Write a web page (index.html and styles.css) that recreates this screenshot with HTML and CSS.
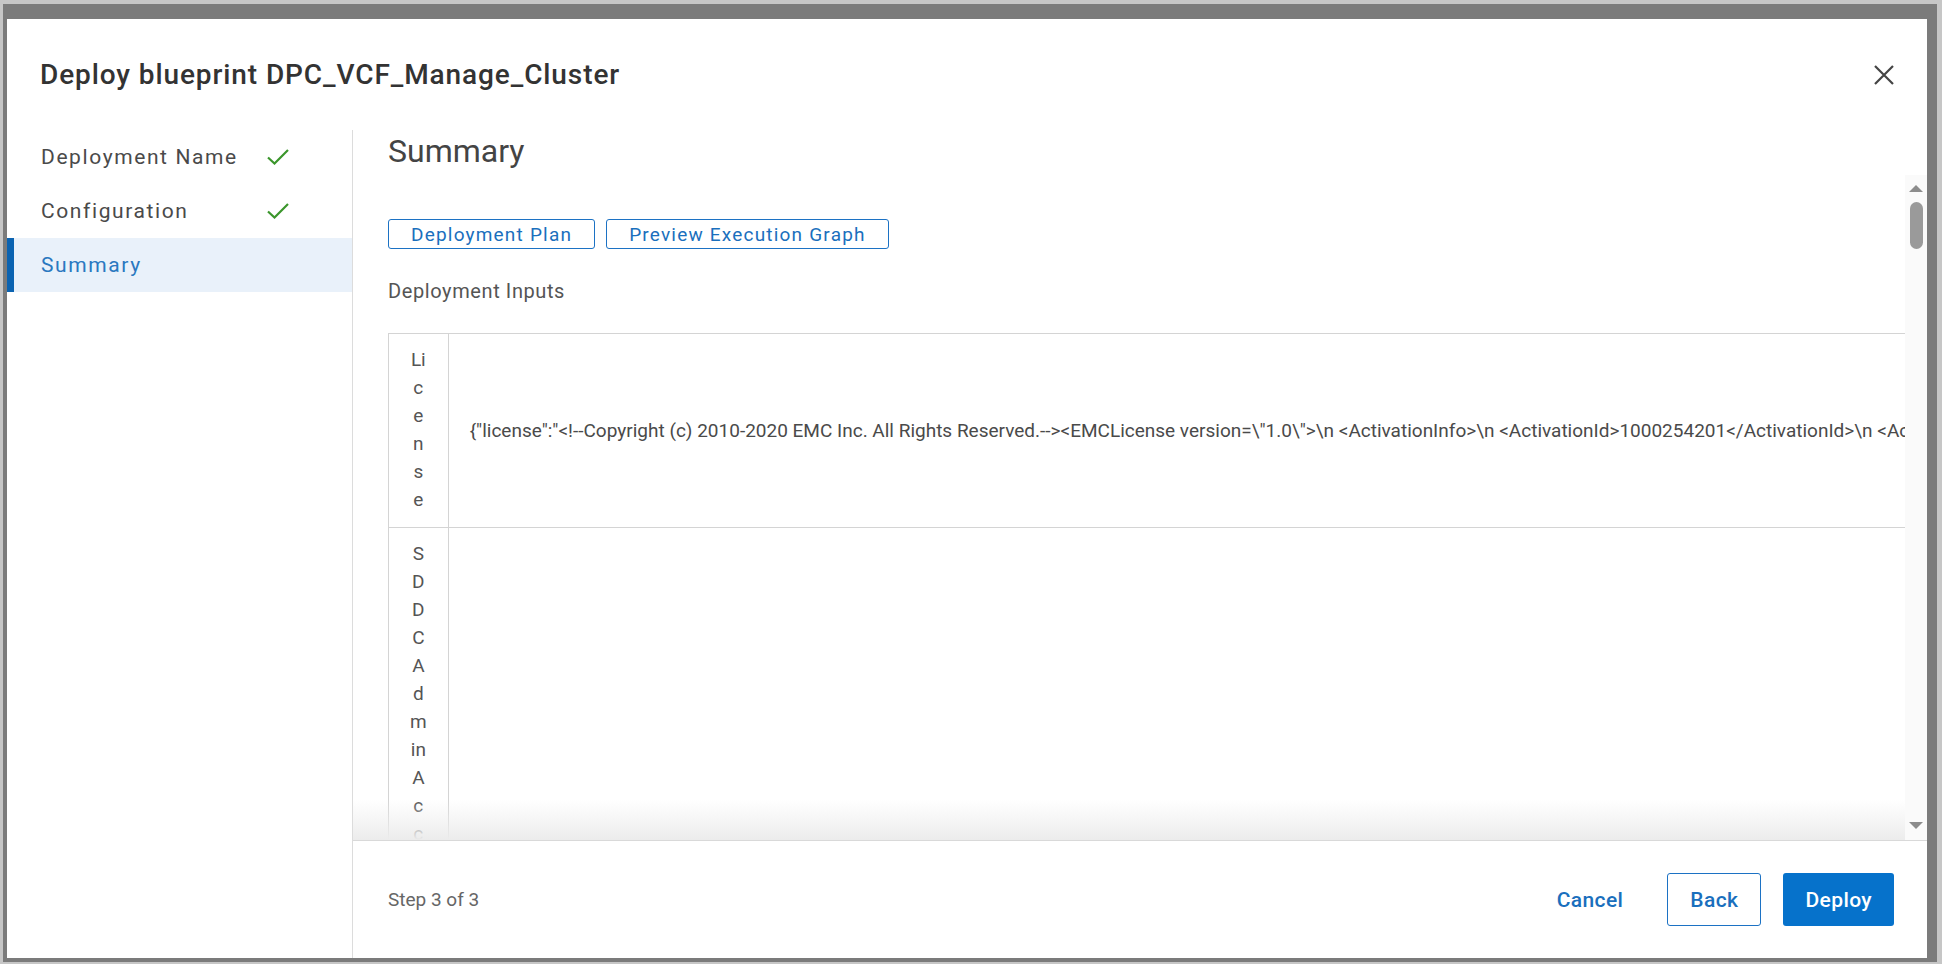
FILE: index.html
```html
<!DOCTYPE html>
<html lang="en">
<head>
    <meta charset="UTF-8">
    <meta name="viewport" content="width=device-width, initial-scale=1.0">
    <title>Deploy blueprint</title>
    <link rel="stylesheet" href="styles.css">
</head>
<body>
    <div class="backdrop">
        <div class="modal">
            <header class="modal-header">
                <h2 class="modal-title">Deploy blueprint DPC_VCF_Manage_Cluster</h2>
                <button class="close-btn" aria-label="Close">
                    <svg width="22" height="22" viewBox="0 0 22 22"><path d="M2 2L20 20M20 2L2 20" /></svg>
                </button>
            </header>

            <div class="modal-body">
                <nav class="steps">
                    <div class="step done">
                        <span class="step-label">Deployment Name</span>
                        <svg class="check" width="22" height="16" viewBox="0 0 22 16"><path d="M1 8.5L7.5 14.5L21 1" /></svg>
                    </div>
                    <div class="step done">
                        <span class="step-label">Configuration</span>
                        <svg class="check" width="22" height="16" viewBox="0 0 22 16"><path d="M1 8.5L7.5 14.5L21 1" /></svg>
                    </div>
                    <div class="step active">
                        <span class="step-label">Summary</span>
                    </div>
                </nav>

                <section class="pane">
                    <h3 class="pane-title">Summary</h3>

                    <div class="scroll-wrap">
                        <div class="scroll-body">
                            <div class="actions">
                                <button class="btn-outline">Deployment Plan</button>
                                <button class="btn-outline">Preview Execution Graph</button>
                            </div>
                            <div class="section-label">Deployment Inputs</div>
                            <table class="inputs">
                                <tr>
                                    <td class="key">License</td>
                                    <td class="val">{"license":"&lt;!--Copyright (c) 2010-2020 EMC Inc. All Rights Reserved.--&gt;&lt;EMCLicense version=\"1.0\"&gt;\n &lt;ActivationInfo&gt;\n &lt;ActivationId&gt;1000254201&lt;/ActivationId&gt;\n &lt;ActivationDate&gt;2020-06-01&lt;/ActivationDate&gt;\n</td>
                                </tr>
                                <tr>
                                    <td class="key">SDDCAdminAccountPassword</td>
                                    <td class="val"></td>
                                </tr>
                            </table>
                        </div>
                        <div class="rail">
                            <span class="arrow up"></span>
                            <span class="thumb"></span>
                            <span class="arrow down"></span>
                        </div>
                        <div class="fade"></div>
                    </div>

                    <footer class="pane-footer">
                        <span class="step-count">Step 3 of 3</span>
                        <div class="footer-actions">
                            <button class="btn-link">Cancel</button>
                            <button class="btn-outline big">Back</button>
                            <button class="btn-primary">Deploy</button>
                        </div>
                    </footer>
                </section>
            </div>
        </div>
    </div>
</body>
</html>
```

FILE: styles.css
```css
html, body {
    height: 100%;
}

body {
    margin: 0;
    padding: 4px 5px 2px 3px;
    box-sizing: border-box;
    background: #c6c6c6;
    font-family: Roboto, "Liberation Sans", sans-serif;
    color: #444;
}

.backdrop {
    height: 100%;
    box-sizing: border-box;
    padding: 15px 10px 4px 4px;
    background: #7b7b7b;
}

.modal {
    height: 939px;
    background: #fff;
    display: flex;
    flex-direction: column;
}

/* header */

.modal-header {
    height: 111px;
    flex: none;
    display: flex;
    align-items: center;
    justify-content: space-between;
    padding: 0 32px 0 33px;
}

.modal-title {
    margin: 0;
    font-size: 28px;
    font-weight: 500;
    letter-spacing: 0.9px;
    color: #333;
}

.close-btn {
    border: 0;
    background: none;
    padding: 0;
    width: 22px;
    height: 22px;
    cursor: pointer;
}

.close-btn path {
    stroke: #444;
    stroke-width: 2.2;
    fill: none;
}

.modal-body {
    flex: 1;
    display: flex;
    min-height: 0;
}

/* step list */

.steps {
    width: 345px;
    flex: none;
    border-right: 1px solid #dcdcdc;
}

.step {
    height: 54px;
    display: flex;
    align-items: center;
    border-left: 7px solid transparent;
    padding-left: 27px;
    font-size: 21px;
    letter-spacing: 1.6px;
    color: #4a4a4a;
}

.step-label {
    width: 226px;
}

.check path {
    stroke: #3b962c;
    stroke-width: 2.2;
    fill: none;
}

.step.active {
    background: #e9f1fa;
    border-left-color: #0b63b1;
    color: #2a78c0;
}

/* main pane */

.pane {
    flex: 1;
    min-width: 0;
    display: flex;
    flex-direction: column;
}

.pane-title {
    margin: 1px 0 4px 35px;
    font-size: 32px;
    line-height: 40px;
    font-weight: 400;
    color: #444;
}

.scroll-wrap {
    flex: 1;
    min-height: 0;
    display: flex;
    position: relative;
}

.scroll-body {
    flex: 1;
    min-width: 0;
    overflow: hidden;
    padding: 44px 0 0 35px;
}

.actions {
    display: flex;
    gap: 11px;
}

.btn-outline {
    height: 30px;
    padding: 0 22px;
    border: 1px solid #1c72c4;
    border-radius: 3px;
    background: #fff;
    color: #1a6fbd;
    font-family: inherit;
    font-size: 19px;
    font-weight: 400;
    letter-spacing: 1.2px;
    cursor: pointer;
}

.section-label {
    margin-top: 30px;
    font-size: 20px;
    line-height: 24px;
    letter-spacing: 0.6px;
    color: #555;
}

.inputs {
    margin-top: 30px;
    border-collapse: collapse;
    border: 1px solid #d4d4d4;
    font-size: 19px;
    color: #4a4a4a;
}

.inputs td {
    border: 1px solid #d4d4d4;
}

.inputs .key {
    width: 18px;
    padding: 12px 21px 13px;
    line-height: 28px;
    text-align: center;
    vertical-align: top;
    word-break: break-all;
    color: #555;
}

.inputs .val {
    padding: 0 21px;
    white-space: nowrap;
    vertical-align: middle;
}

/* scrollbar */

.rail {
    width: 22px;
    flex: none;
    background: #fafafa;
    display: flex;
    flex-direction: column;
    align-items: center;
    padding-top: 10px;
}

.arrow {
    width: 0;
    height: 0;
    border-left: 7px solid transparent;
    border-right: 7px solid transparent;
}

.arrow.up {
    border-bottom: 7px solid #8c8c8c;
}

.arrow.down {
    border-top: 7px solid #8c8c8c;
    margin-top: auto;
    margin-bottom: 11px;
}

.thumb {
    width: 13px;
    height: 47px;
    margin-top: 10px;
    border-radius: 7px;
    background: #9a9a9a;
}

.fade {
    position: absolute;
    left: 0;
    right: 22px;
    bottom: 0;
    height: 40px;
    background: linear-gradient(rgba(255, 255, 255, 0), #ececec);
    pointer-events: none;
}

/* footer */

.pane-footer {
    height: 118px;
    flex: none;
    box-sizing: border-box;
    border-top: 1px solid #d9d9d9;
    display: flex;
    align-items: center;
    justify-content: space-between;
    padding: 0 33px 0 35px;
}

.step-count {
    font-size: 19px;
    color: #666;
}

.footer-actions {
    display: flex;
    gap: 22px;
}

.footer-actions button {
    height: 53px;
    padding: 0 22px;
    border-radius: 3px;
    font-family: inherit;
    font-size: 21px;
    font-weight: 500;
    letter-spacing: 0.4px;
    cursor: pointer;
}

.btn-link {
    border: 0;
    background: none;
    color: #1a6fbd;
}

.btn-primary {
    border: 0;
    background: #0672cb;
    color: #fff;
}
```
